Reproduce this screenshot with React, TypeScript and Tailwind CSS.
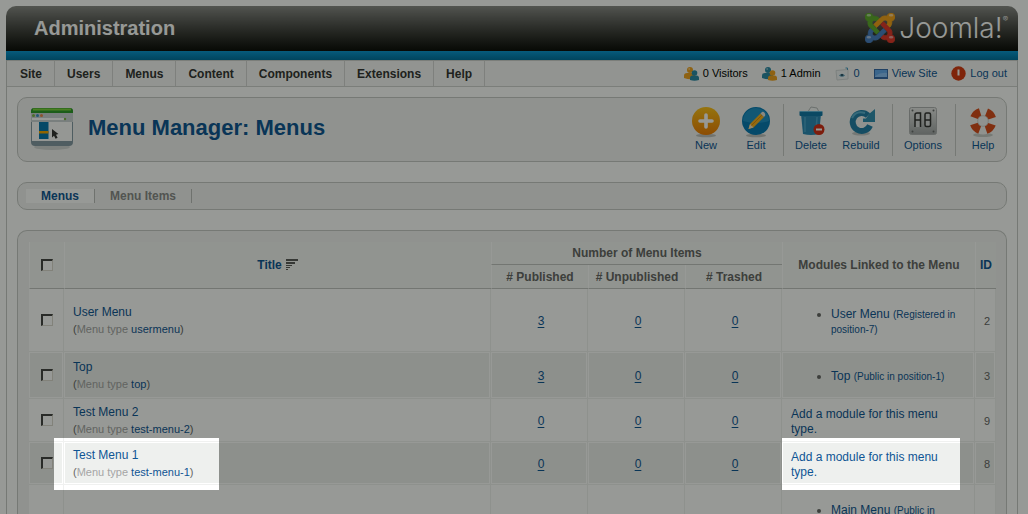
import React from "react";

function PeopleIcon({ front, back }: { front: string; back: string }) {
  return (
    <svg width="15" height="14" viewBox="0 0 15 14" aria-hidden="true">
      <circle cx="6" cy="3" r="3" fill={back} />
      <path d="M0 11V8.500Q0 6 3 6h5q3 0 3 2.500V12Q5 13 0 11Z" fill={back} />
      <circle cx="10.500" cy="6" r="2.800" fill={front} />
      <path d="M6 13v-2q0-2.500 2.500-2.500h4q2.500 0 2.500 2.500v2q-4.500 1.500-9 0Z" fill={front} />
      <circle cx="5.200" cy="2" r="1" fill="#fff" opacity="0.4" />
    </svg>
  );
}

function MailIcon() {
  return (
    <svg width="15" height="14" viewBox="0 0 15 14" aria-hidden="true">
      <path d="M1 3.500 13 2.500V12L2 13Z" fill="#eef2f4" stroke="#d3d7d9" />
      <path d="M4 8.500q3-3.500 6 0-3 2.500-6 0Z" fill="#5b96b4" />
      <circle cx="7" cy="8" r="1.100" fill="#26495c" />
      <path d="M10.500 1h2v2" fill="none" stroke="#4b9ac0" />
    </svg>
  );
}

function MonitorIcon() {
  return (
    <svg width="14" height="10" viewBox="0 0 14 10" aria-hidden="true">
      <rect width="14" height="10" fill="#3569a8" />
      <rect x="1" y="1" width="12" height="7" fill="#63a8ee" />
      <path d="M1 7q6-4 12-3v4H1Z" fill="#9bcafb" opacity="0.7" />
    </svg>
  );
}

function PowerIcon() {
  return (
    <svg width="15" height="15" viewBox="0 0 15 15" aria-hidden="true">
      <circle cx="7.500" cy="7.500" r="7.200" fill="#d63a14" />
      <path d="M7.500 3.500v6" stroke="#fff" strokeWidth="2" />
    </svg>
  );
}

const joomlaArm =
  "M.6 92.1C.6 58.8 27.4 32 60.4 32c30 0 54.5 21.9 59.2 50.2 32.6-7.6 67.1.6 96.5 30l-44.3 44.3c-20.5-20.5-42.6-16.3-55.4-3.5-14.3 14.3-14.3 37.9 0 52.2l99.5 99.5-44 44.3c-87.7-87.2-49.7-49.7-99.8-99.7-26.8-26.5-35-64.8-24.8-98.9C20.4 144.6.6 120.7.6 92.1z";

const joomlaParts = [
  { color: "#5faa2e", turn: "rotate(0 224 256)" },
  { color: "#f5a21b", turn: "rotate(90 224 256)" },
  { color: "#e1372c", turn: "rotate(180 224 256)" },
  { color: "#4a80c4", turn: "rotate(270 224 256)" },
];

function JoomlaMark() {
  return (
    <svg width="30" height="30" viewBox="0 32 448 448" aria-hidden="true">
      {joomlaParts.map((part) => (
        <path
          key={part.color}
          d={joomlaArm}
          fill={part.color}
          stroke={part.color}
          strokeWidth="12"
          transform={part.turn}
        />
      ))}
      <g fill="#fff" opacity="0.5">
        <ellipse cx="58" cy="66" rx="34" ry="20" />
        <ellipse cx="390" cy="66" rx="34" ry="20" />
        <ellipse cx="58" cy="394" rx="34" ry="20" />
        <ellipse cx="390" cy="394" rx="34" ry="20" />
      </g>
    </svg>
  );
}

function MenuManagerIcon() {
  return (
    <svg width="44" height="44" viewBox="0 0 44 44" aria-hidden="true">
      <ellipse cx="22" cy="39" rx="18" ry="3" fill="#d3d6d6" />
      <rect x="1" y="0" width="42" height="38" rx="4" fill="#8599a6" />
      <path d="M1 5V3q0-3 3-3h36q3 0 3 3v2Z" fill="#2f9a2b" />
      <path d="M3 1.500h38" stroke="#7fd23c" strokeWidth="2" />
      <rect x="1" y="5" width="42" height="9" fill="#cdd3d6" />
      <rect x="2" y="10" width="32" height="2" fill="#fff" />
      <circle cx="3.500" cy="7.500" r="1.500" fill="#7eb648" />
      <circle cx="7.500" cy="7.500" r="1.500" fill="#3b91c6" />
      <circle cx="11.500" cy="7.500" r="1.500" fill="#e98a4e" />
      <circle cx="35" cy="11" r="1.200" fill="#7eb648" />
      <path d="M2 14h40v19H2Z" fill="#fbfcfc" />
      <rect x="9" y="14" width="9.500" height="17" fill="#0877b0" />
      <rect x="9" y="23" width="9.500" height="2.500" fill="#f6a700" />
      <path d="M22 21v8.500l2-1.800 1.600 3 2-1-1.600-3 2.400-.6Z" fill="#333" />
    </svg>
  );
}

function NewIcon() {
  return (
    <svg width="32" height="32" viewBox="0 0 32 32" aria-hidden="true">
      <defs>
        <linearGradient id="newFill" x1="0" y1="0" x2="0" y2="1">
          <stop offset="0" stopColor="#fcc11a" />
          <stop offset="1" stopColor="#ee7d05" />
        </linearGradient>
      </defs>
      <ellipse cx="16" cy="29.500" rx="10" ry="1.800" fill="#bfc0be" />
      <circle cx="16" cy="15" r="14" fill="url(#newFill)" />
      <path d="M16 9v12M10 15h12" stroke="#fff" strokeWidth="3.600" strokeLinecap="round" />
    </svg>
  );
}

function EditIcon() {
  return (
    <svg width="32" height="32" viewBox="0 0 32 32" aria-hidden="true">
      <ellipse cx="16" cy="29.500" rx="10" ry="1.800" fill="#bfc0be" />
      <circle cx="16" cy="15" r="14" fill="#0779b4" />
      <path d="M3 15a13 13 0 0 1 26 0q-13 4-26 0Z" fill="#2f9fd2" opacity="0.6" />
      <path d="M8.500 23 10 18 20.500 7.500l3.500 3.500L13.500 21.500Z" fill="#f7b01c" />
      <path d="m10 18 3.500 3.500L8.500 23Z" fill="#f4dfbb" />
      <path d="m11.500 19.500 10.500-10.500" stroke="#d98b12" />
      <path d="m20.500 7.500 1.500-1.500q1.500-.5 2.500.8t.7 2.700L24 11Z" fill="#e8e2dc" />
    </svg>
  );
}

function DeleteIcon() {
  return (
    <svg width="32" height="32" viewBox="0 0 32 32" aria-hidden="true">
      <path d="m14 4 2-3 6 1 2 4H13Z" fill="#f5f7f7" stroke="#b5b9ba" />
      <path d="M6 8h20l-2 20q-8 2-16 0Z" fill="#2c89b7" />
      <path d="M10 11v15M22 11l-1 15" stroke="#4ba4cc" strokeWidth="1.500" />
      <rect x="4.500" y="5" width="23" height="5" rx="1" fill="#1277a8" />
      <path d="M5 5.500h22" stroke="#65b8dc" />
      <circle cx="24" cy="23.500" r="5.500" fill="#d32d17" />
      <path d="M21 23.500h6" stroke="#fff" strokeWidth="2" />
    </svg>
  );
}

function RebuildIcon() {
  return (
    <svg width="32" height="32" viewBox="0 0 32 32" aria-hidden="true">
      <ellipse cx="16" cy="27.500" rx="9" ry="2" fill="#c5c8c8" />
      <path d="M25 19.500A9 9 0 1 1 23 9.500" fill="none" stroke="#237fa8" strokeWidth="6" />
      <path d="M7 12q4-8 13-5" fill="none" stroke="#5bafd0" strokeWidth="2" />
      <path d="M30 3v13H18v-3.500h3L24 8Z" fill="#328db2" />
    </svg>
  );
}

function OptionsIcon() {
  return (
    <svg width="32" height="32" viewBox="0 0 32 32" aria-hidden="true">
      <defs>
        <linearGradient id="plate" x1="0" y1="0" x2="0" y2="1">
          <stop offset="0" stopColor="#e7e8e8" />
          <stop offset="1" stopColor="#a1a4a6" />
        </linearGradient>
      </defs>
      <rect x="2.500" y="1.500" width="27" height="27" rx="2" fill="url(#plate)" stroke="#b0b2b3" />
      <g fill="#696c6d">
        <circle cx="5.500" cy="4.500" r="1" />
        <circle cx="26.500" cy="4.500" r="1" />
        <circle cx="5.500" cy="25.500" r="1" />
        <circle cx="26.500" cy="25.500" r="1" />
      </g>
      <g fill="#dadcdd" stroke="#333" strokeWidth="1.500">
        <path d="M8 21V9q0-2 2-2h3.500v14M8 14h5" />
        <rect x="18" y="7" width="5.500" height="13.500" rx="1.500" />
        <path d="M18 14h5.500" />
      </g>
    </svg>
  );
}

function HelpIcon() {
  return (
    <svg width="32" height="32" viewBox="0 0 32 32" aria-hidden="true">
      <ellipse cx="16" cy="29" rx="10" ry="2" fill="#c8cac8" />
      <circle cx="16" cy="15" r="9.500" fill="none" stroke="#f3f3f1" strokeWidth="8" />
      <circle
        cx="16"
        cy="15"
        r="9.500"
        fill="none"
        stroke="#d94b1c"
        strokeWidth="8"
        strokeDasharray="8.400 6.520"
        strokeDashoffset="-3.300"
      />
      <circle cx="16" cy="15" r="5.300" fill="none" stroke="#c9c9c7" strokeWidth="0.800" />
    </svg>
  );
}

function SortIcon() {
  return (
    <svg width="13" height="12" viewBox="0 0 13 12" aria-hidden="true" fill="#5a5a5a">
      <rect width="12" height="2" />
      <rect y="3" width="9" height="2" />
      <rect y="6" width="6" height="1" />
      <rect y="8" width="4" height="1" />
      <rect y="10" width="2" height="1" />
    </svg>
  );
}

function ToolButton({ label, wide, children }: { label: string; wide: string; children: React.ReactNode }) {
  return (
    <button type="button" className={`flex flex-col items-center text-[11px] leading-4 text-[#0f5594] ${wide}`}>
      {children}
      <span className="-mt-px">{label}</span>
    </button>
  );
}

function Check({ label }: { label: string }) {
  return (
    <input
      type="checkbox"
      aria-label={label}
      className="block size-3 appearance-none border border-t-2 border-l-2 border-t-[#454545] border-l-[#454545] border-r-[#dcd9d0] border-b-[#dcd9d0] bg-white"
    />
  );
}

type MenuRow = {
  title: string;
  type: string;
  counts: number[];
  module?: { name: string; access: string };
  id: number;
  height: string;
};

const rows: MenuRow[] = [
  { title: "User Menu", type: "usermenu", counts: [3, 0, 0], module: { name: "User Menu", access: "(Registered in position-7)" }, id: 2, height: "h-[63px]" },
  { title: "Top", type: "top", counts: [3, 0, 0], module: { name: "Top", access: "(Public in position-1)" }, id: 3, height: "h-[47px]" },
  { title: "Test Menu 2", type: "test-menu-2", counts: [0, 0, 0], id: 9, height: "h-[43px]" },
  { title: "Test Menu 1", type: "test-menu-1", counts: [0, 0, 0], id: 8, height: "h-[43px]" },
];

const navItems = ["Site", "Users", "Menus", "Content", "Components", "Extensions", "Help"];

const th = "border-l border-l-white border-b border-b-[#c2c4c2] bg-[#f5f6f5] p-0 text-center font-bold";
const td = "border-r border-b border-[#f0f1f0] p-0 shadow-[inset_0_0_0_1px_#fff]";

function ModuleItem({ name, access }: { name: string; access: string }) {
  return (
    <ul className="list-disc pr-2 pl-[49px] leading-[15px]">
      <li>
        <a href="#module" className="text-[#0f5594]">{name}</a>{" "}
        <span className="text-[10px] text-[#0f5594]">{access}</span>
      </li>
    </ul>
  );
}

export default function App() {
  return (
    <div className="relative h-screen overflow-hidden bg-white pt-1.5 pr-2.5 pl-1.5 font-['Liberation_Sans',Arial,sans-serif] text-xs text-[#666]">
      <header className="flex h-[45px] items-center justify-between rounded-t-[10px] bg-linear-to-b from-[#8b8b89] to-[#0c0c0a] pr-2.5 pl-7">
        <h1 className="pb-0.5 text-xl font-bold text-white">Administration</h1>
        <div className="flex items-center gap-1 pb-0.5 text-white">
          <JoomlaMark />
          <span className="flex items-start font-[Inter,sans-serif] text-[28px] leading-[30px] font-light">
            Joomla!
            <span className="text-[8px] leading-3">®</span>
          </span>
        </div>
      </header>
      <div className="h-[9px] bg-linear-to-b from-[#0b96d2] to-[#00709f]" />

      <div className="border-x border-[#c7c9c7]">
        <div className="flex h-[27px] items-stretch justify-between border-y border-[#cfd1cf] bg-[#f6f7f6] pr-2.5">
          <nav className="flex pl-px">
            {navItems.map((item) => (
              <a key={item} href="#nav" className="flex items-center border-r border-[#d4d5d4] px-3 font-bold text-[#333]">
                {item}
              </a>
            ))}
          </nav>
          <div className="flex items-center gap-3.5 text-[11px] text-black">
            <span className="flex items-center gap-1">
              <PeopleIcon front="#2b88a5" back="#f0a221" />0 Visitors
            </span>
            <span className="flex items-center gap-1">
              <PeopleIcon front="#f0a221" back="#2b88a5" />1 Admin
            </span>
            <a href="#messages" className="flex items-center gap-1 text-[#0f5594]">
              <MailIcon />0
            </a>
            <a href="#site" className="flex items-center gap-1 text-[#0f5594]">
              <MonitorIcon />
              View Site
            </a>
            <a href="#logout" className="flex items-center gap-1 text-[#0f5594]">
              <PowerIcon />
              Log out
            </a>
          </div>
        </div>

        <main className="px-2.5 pt-2.5">
          <section className="flex h-[65px] items-center justify-between rounded-[10px] border border-[#c7c9c7] bg-[#f3f4f3] pl-3">
            <div className="flex items-center gap-3.5">
              <MenuManagerIcon />
              <h2 className="pb-1 text-[22px] font-bold text-[#0f5594]">Menu Manager: Menus</h2>
            </div>
            <div className="flex items-center">
              <ToolButton label="New" wide="w-[50px]"><NewIcon /></ToolButton>
              <ToolButton label="Edit" wide="w-[50px]"><EditIcon /></ToolButton>
              <span className="mx-0.5 h-[52px] w-px bg-[#c7c9c7]" />
              <ToolButton label="Delete" wide="w-[50px]"><DeleteIcon /></ToolButton>
              <ToolButton label="Rebuild" wide="w-[50px]"><RebuildIcon /></ToolButton>
              <span className="mr-1 ml-1.5 h-[52px] w-px bg-[#c7c9c7]" />
              <ToolButton label="Options" wide="w-[52px]"><OptionsIcon /></ToolButton>
              <span className="mr-1 ml-1.5 h-[52px] w-px bg-[#c7c9c7]" />
              <ToolButton label="Help" wide="w-[46px]"><HelpIcon /></ToolButton>
            </div>
          </section>

          <nav className="mt-5 flex h-7 items-center rounded-[10px] border border-[#c7c9c7] bg-[#f3f4f3] pl-2 font-bold">
            <a href="#menus" className="border-r border-[#bbbdbb] bg-white px-[15px] leading-[14px] text-[#0f5594]">Menus</a>
            <a href="#items" className="border-r border-[#bbbdbb] px-[15px] leading-[14px] text-[#8a8a8a]">Menu Items</a>
          </nav>

          <section className="mt-5 rounded-t-[10px] border border-b-0 border-[#c7c9c7] bg-[#f3f4f3] pt-[11px] pr-2.5 pl-[11px]">
            <table className="w-full table-fixed border-separate border-spacing-0">
              <colgroup>
                <col className="w-[35px]" />
                <col />
                <col className="w-[97px]" />
                <col className="w-[97px]" />
                <col className="w-[97px]" />
                <col className="w-[193px]" />
                <col className="w-[21px]" />
              </colgroup>
              <thead>
                <tr className="h-[23px]">
                  <th rowSpan={2} className={th}>
                    <div className="flex justify-center"><Check label="Select all menus" /></div>
                  </th>
                  <th rowSpan={2} className={th}>
                    <a href="#sort" className="flex items-center justify-center gap-1 text-[#0f5594]">
                      Title <SortIcon />
                    </a>
                  </th>
                  <th colSpan={3} className={th}>Number of Menu Items</th>
                  <th rowSpan={2} className={th}>Modules Linked to the Menu</th>
                  <th rowSpan={2} className={th}>
                    <a href="#id" className="text-[#0f5594]">ID</a>
                  </th>
                </tr>
                <tr className="h-6">
                  <th className={th}># Published</th>
                  <th className={th}># Unpublished</th>
                  <th className={th}># Trashed</th>
                </tr>
              </thead>
              <tbody>
                {rows.map((row) => (
                  <tr key={row.id} className={`${row.height} bg-white even:bg-[#eef0ee]`}>
                    <td className={td}>
                      <div className="flex justify-center pl-0.5"><Check label={`Select ${row.title}`} /></div>
                    </td>
                    <td className={`${td} leading-[17px]`}>
                      <div className="pt-0.5 pl-[9px]">
                        <a href="#menu" className="text-[#0f5594]">{row.title}</a>
                        <p className="text-[11px]">
                          (<span className="text-[#a5a5a5]">Menu type</span>{" "}
                          <span className="text-[#0f5594]">{row.type}</span>)
                        </p>
                      </div>
                    </td>
                    {row.counts.map((count, i) => (
                      <td key={i} className={`${td} text-center`}>
                        <div className="pt-0.5 pl-1">
                          <a href="#count" className="text-[#0f5594] underline underline-offset-2">{count}</a>
                        </div>
                      </td>
                    ))}
                    <td className={td}>
                      <div className="pt-[3px]">
                        {row.module ? (
                          <ModuleItem name={row.module.name} access={row.module.access} />
                        ) : (
                          <a href="#add" className="block pr-6 pl-[9px] leading-[15px] text-[#0f5594]">
                            Add a module for this menu type.
                          </a>
                        )}
                      </div>
                    </td>
                    <td className={`${td} text-center text-[11px]`}>
                      <div className="pt-0.5 pl-1">{row.id}</div>
                    </td>
                  </tr>
                ))}
                <tr className="h-20 bg-white">
                  <td className={td} />
                  <td className={td} />
                  <td className={td} />
                  <td className={td} />
                  <td className={td} />
                  <td className={`${td} align-top`}>
                    <div className="pt-[18px]"><ModuleItem name="Main Menu" access="(Public in" /></div>
                  </td>
                  <td className={td} />
                </tr>
              </tbody>
            </table>
          </section>
        </main>
      </div>

      {/* Spotlight shade with two openings over the highlighted cells */}
      <div className="pointer-events-none absolute inset-0 bg-[#020800]/41 [clip-path:polygon(evenodd,0_0,100%_0,100%_100%,0_100%,0_0,54px_438px,219px_438px,219px_490px,54px_490px,54px_438px,calc(100%_-_246px)_438px,calc(100%_-_68px)_438px,calc(100%_-_68px)_490px,calc(100%_-_246px)_490px,calc(100%_-_246px)_438px,54px_438px,0_0)]" />
    </div>
  );
}
